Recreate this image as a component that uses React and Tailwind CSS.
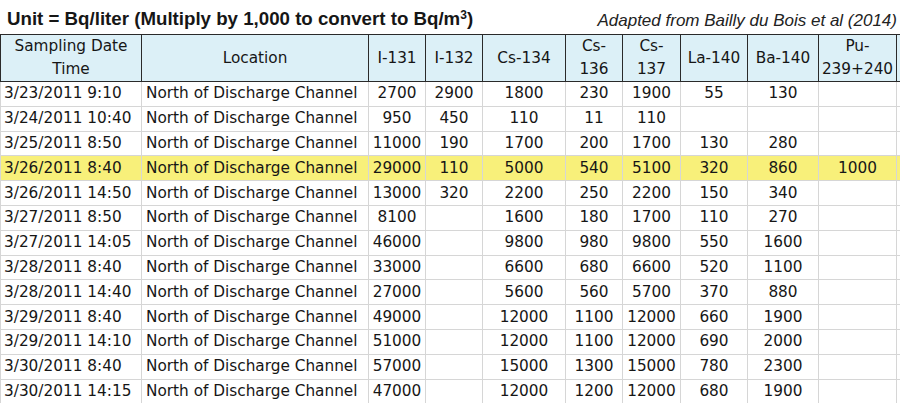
import React from 'react';

const cols = [141, 227, 57, 57, 83, 57, 58, 67, 71, 78, 40];

const headers = [
  ['Sampling Date', 'Time'],
  ['Location'],
  ['I-131'],
  ['I-132'],
  ['Cs-134'],
  ['Cs-', '136'],
  ['Cs-', '137'],
  ['La-140'],
  ['Ba-140'],
  ['Pu-', '239+240'],
  [''],
];

const loc = 'North of Discharge Channel';

// date, I-131, I-132, Cs-134, Cs-136, Cs-137, La-140, Ba-140, Pu
const rows = [
  ['3/23/2011 9:10', '2700', '2900', '1800', '230', '1900', '55', '130', ''],
  ['3/24/2011 10:40', '950', '450', '110', '11', '110', '', '', ''],
  ['3/25/2011 8:50', '11000', '190', '1700', '200', '1700', '130', '280', ''],
  ['3/26/2011 8:40', '29000', '110', '5000', '540', '5100', '320', '860', '1000'],
  ['3/26/2011 14:50', '13000', '320', '2200', '250', '2200', '150', '340', ''],
  ['3/27/2011 8:50', '8100', '', '1600', '180', '1700', '110', '270', ''],
  ['3/27/2011 14:05', '46000', '', '9800', '980', '9800', '550', '1600', ''],
  ['3/28/2011 8:40', '33000', '', '6600', '680', '6600', '520', '1100', ''],
  ['3/28/2011 14:40', '27000', '', '5600', '560', '5700', '370', '880', ''],
  ['3/29/2011 8:40', '49000', '', '12000', '1100', '12000', '660', '1900', ''],
  ['3/29/2011 14:10', '51000', '', '12000', '1100', '12000', '690', '2000', ''],
  ['3/30/2011 8:40', '57000', '', '15000', '1300', '15000', '780', '2300', ''],
  ['3/30/2011 14:15', '47000', '', '12000', '1200', '12000', '680', '1900', ''],
];

export default function App() {
  return (
    <div className="w-[900px] h-[403px] overflow-hidden bg-white text-[#161616]">
      {/* caption line */}
      <div className="flex items-end justify-between h-[34px] pl-[7px] pr-[3px] pb-[5px]">
        <div className="font-['Liberation_Sans',Arial,sans-serif] font-bold text-[18.7px] leading-none">
          Unit = Bq/liter (Multiply by 1,000 to convert to Bq/m<sup className="text-[12px]">3</sup>)
        </div>
        <div className="font-['Liberation_Sans',Arial,sans-serif] italic text-[17px] leading-none text-[#222]">
          Adapted from Bailly du Bois et al (2014)
        </div>
      </div>

      <table className="table-fixed border-collapse w-[937px] font-['DejaVu_Sans',sans-serif] text-[15.3px]">
        <colgroup>
          {cols.map((w, i) => (
            <col key={i} style={{ width: w }} />
          ))}
        </colgroup>
        <thead>
          <tr className="h-[46px] bg-[#dcf0f7]">
            {headers.map((h, i) => (
              <th
                key={i}
                className="border-[1.5px] border-[#2a2a2a] font-normal text-center leading-[23px] px-0 align-middle"
              >
                {h.map((line, j) => (
                  <div key={j}>{line}</div>
                ))}
              </th>
            ))}
          </tr>
        </thead>
        <tbody>
          {rows.map((r, i) => {
            const hl = r[0] === '3/26/2011 8:40';
            return (
              <tr key={i} className={`h-[24.8px] ${hl ? 'bg-[#f8f07a]' : ''}`}>
                <td className="border border-[#d6d6d6] pl-[3px] whitespace-nowrap overflow-hidden">{r[0]}</td>
                <td className="border border-[#d6d6d6] pl-[4px] whitespace-nowrap overflow-hidden">{loc}</td>
                {r.slice(1).map((v, j) => (
                  <td key={j} className="border border-[#d6d6d6] text-center whitespace-nowrap">
                    {v}
                  </td>
                ))}
                <td className="border border-[#d6d6d6]"></td>
              </tr>
            );
          })}
        </tbody>
      </table>
    </div>
  );
}
